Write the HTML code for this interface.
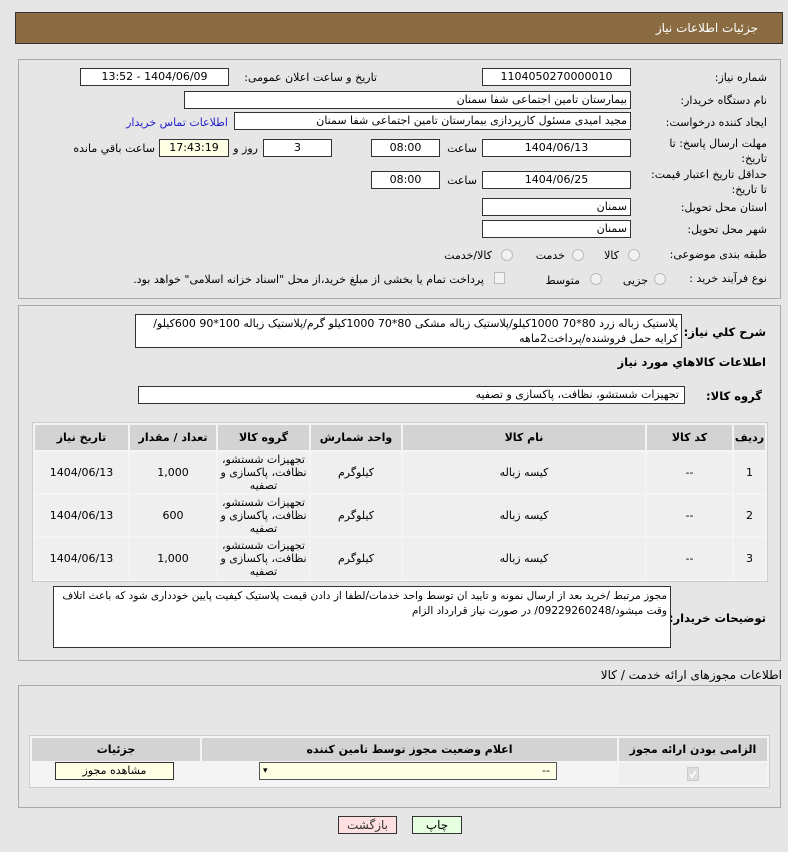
<!DOCTYPE html>
<html><head><meta charset="utf-8">
<style>
*{box-sizing:border-box;margin:0;padding:0}
body{width:788px;height:852px;background:#e6e6e6;font-family:"DejaVu Sans","Liberation Sans",sans-serif;font-size:11px;color:#000;position:relative;overflow:hidden;direction:rtl}
.a{position:absolute;white-space:nowrap}
.box{position:absolute;background:#fff;border:1px solid #333;text-align:center;height:18px;line-height:16px;font-size:11px;white-space:nowrap;overflow:hidden}
.lbl{position:absolute;white-space:nowrap;font-size:11px;line-height:14px}
.panel{position:absolute;border:1px solid #aaa}
table{border-collapse:separate;border-spacing:2px;position:absolute;background:#f4f4f4;border:1px solid #ccc;direction:rtl}
th{background:#d3d3d3;font-weight:bold;font-size:11px}
td{background:#efefef;text-align:center;font-size:11px;line-height:13px}
.rad{position:absolute;width:12px;height:12px;border:1px solid #bbb;border-radius:50%;background:#f2f2f2}
.btn{position:absolute;border:1px solid #333;height:18px;line-height:16px;text-align:center;font-size:12px}
.bl{font-weight:bold;font-size:11.5px}
</style></head><body>
<div class="a" style="left:15px;top:12px;width:768px;height:32px;background:#8b6c42;border:1px solid #333;"></div>
<div class="a" style="right:30px;top:21px;color:#fff;font-size:12px">جزئیات اطلاعات نیاز</div>

<div class="panel" style="left:18px;top:59px;width:763px;height:240px"></div>

<div class="lbl" style="right:21px;top:71px">شماره نیاز:</div>
<div class="box" style="left:482px;top:68px;width:149px">1104050270000010</div>
<div class="lbl" style="right:411px;top:71px">تاریخ و ساعت اعلان عمومی:</div>
<div class="box" style="left:80px;top:68px;width:149px">1404/06/09 - 13:52</div>

<div class="lbl" style="right:21px;top:94px">نام دستگاه خریدار:</div>
<div class="box" style="left:184px;top:91px;width:447px;text-align:right;padding-right:3px">بیمارستان تامین اجتماعی شفا سمنان</div>

<div class="lbl" style="right:21px;top:116px">ایجاد کننده درخواست:</div>
<div class="box" style="left:234px;top:112px;width:397px;text-align:right;padding-right:3px">مجید امیدی مسئول کارپردازی بیمارستان تامین اجتماعی شفا سمنان</div>
<div class="lbl" style="right:560px;top:116px;color:#2222cc">اطلاعات تماس خریدار</div>

<div class="lbl" style="right:21px;top:136px;line-height:15px;text-align:right">مهلت ارسال پاسخ: تا<br>تاریخ:</div>
<div class="box" style="left:482px;top:139px;width:149px">1404/06/13</div>
<div class="lbl" style="right:311px;top:142px">ساعت</div>
<div class="box" style="left:371px;top:139px;width:69px">08:00</div>
<div class="box" style="left:263px;top:139px;width:69px">3</div>
<div class="lbl" style="right:530px;top:142px">روز و</div>
<div class="box" style="left:159px;top:139px;width:70px;background:#ffffe6">17:43:19</div>
<div class="lbl" style="right:633px;top:142px">ساعت باقي مانده</div>

<div class="lbl" style="right:21px;top:167px;line-height:15px;text-align:right">حداقل تاریخ اعتبار قیمت:<br>تا تاریخ:</div>
<div class="box" style="left:482px;top:171px;width:149px">1404/06/25</div>
<div class="lbl" style="right:311px;top:174px">ساعت</div>
<div class="box" style="left:371px;top:171px;width:69px">08:00</div>

<div class="lbl" style="right:21px;top:201px">استان محل تحویل:</div>
<div class="box" style="left:482px;top:198px;width:149px;text-align:right;padding-right:3px">سمنان</div>
<div class="lbl" style="right:21px;top:223px">شهر محل تحویل:</div>
<div class="box" style="left:482px;top:220px;width:149px;text-align:right;padding-right:3px">سمنان</div>

<div class="lbl" style="right:21px;top:248px">طبقه بندی موضوعی:</div>
<div class="rad" style="left:628px;top:249px"></div><div class="lbl" style="right:169px;top:249px">کالا</div>
<div class="rad" style="left:572px;top:249px"></div><div class="lbl" style="right:223px;top:249px">خدمت</div>
<div class="rad" style="left:501px;top:249px"></div><div class="lbl" style="right:296px;top:249px">کالا/خدمت</div>

<div class="lbl" style="right:21px;top:272px">نوع فرآیند خرید :</div>
<div class="rad" style="left:654px;top:273px"></div><div class="lbl" style="right:140px;top:274px">جزیی</div>
<div class="rad" style="left:590px;top:273px"></div><div class="lbl" style="right:208px;top:274px">متوسط</div>
<div class="a" style="left:494px;top:272px;width:11px;height:12px;border:1px solid #bbb;background:#f2f2f2"></div>
<div class="lbl" style="right:304px;top:273px">پرداخت تمام یا بخشی از مبلغ خرید،از محل "اسناد خزانه اسلامی" خواهد بود.</div>

<div class="panel" style="left:18px;top:305px;width:763px;height:356px"></div>
<div class="lbl bl" style="right:22px;top:325px">شرح كلي نياز:</div>
<div class="a" style="left:135px;top:314px;width:547px;height:34px;background:#fff;border:1px solid #333;white-space:normal;text-align:right;padding:1px 3px;font-size:11px;line-height:15px">پلاستیک زباله زرد 80*70 1000کیلو/پلاستیک زباله مشکی 80*70 1000کیلو گرم/پلاستیک زباله 100*90 600کیلو/کرایه حمل فروشنده/پرداخت2ماهه</div>
<div class="lbl bl" style="right:22px;top:355px">اطلاعات كالاهاي مورد نياز</div>
<div class="lbl bl" style="right:26px;top:389px">گروه کالا:</div>
<div class="box" style="left:138px;top:386px;width:547px;text-align:right;padding-right:5px">تجهیزات شستشو، نظافت، پاکسازی و تصفیه</div>

<table style="left:32px;top:422px;width:736px">
<tr style="height:25px"><th style="width:31px">ردیف</th><th style="width:85px">کد کالا</th><th>نام کالا</th><th style="width:90px">واحد شمارش</th><th style="width:91px">گروه کالا</th><th style="width:86px">تعداد / مقدار</th><th style="width:93px">تاریخ نیاز</th></tr>
<tr style="height:41px"><td>1</td><td>--</td><td>کیسه زباله</td><td>کیلوگرم</td><td>تجهیزات شستشو، نظافت، پاکسازی و تصفیه</td><td>1,000</td><td>1404/06/13</td></tr>
<tr style="height:41px"><td>2</td><td>--</td><td>کیسه زباله</td><td>کیلوگرم</td><td>تجهیزات شستشو، نظافت، پاکسازی و تصفیه</td><td>600</td><td>1404/06/13</td></tr>
<tr style="height:41px"><td>3</td><td>--</td><td>کیسه زباله</td><td>کیلوگرم</td><td>تجهیزات شستشو، نظافت، پاکسازی و تصفیه</td><td>1,000</td><td>1404/06/13</td></tr>
</table>

<div class="lbl bl" style="right:22px;top:611px">توضیحات خریدار:</div>
<div class="a" style="left:53px;top:586px;width:618px;height:62px;background:#fff;border:1px solid #333;white-space:normal;text-align:right;padding:2px 3px;font-size:10.5px;line-height:15px">مجوز مرتبط /خرید بعد از ارسال نمونه و تایید ان توسط واحد خدمات/لطفا از دادن قیمت پلاستیک کیفیت پایین خودداری شود که باعث اتلاف وقت میشود/09229260248/ در صورت نیاز قرارداد الزام</div>

<div class="lbl" style="right:6px;top:668px;font-size:12px">اطلاعات مجوزهای ارائه خدمت / کالا</div>
<div class="panel" style="left:18px;top:685px;width:763px;height:123px"></div>
<table style="left:29px;top:735px;width:741px">
<tr style="height:23px"><th style="width:148px">الزامی بودن ارائه مجوز</th><th>اعلام وضعیت مجوز توسط تامین کننده</th><th style="width:168px">جزئیات</th></tr>
<tr style="height:22px"><td><span style="display:inline-block;width:12px;height:14px;background:#ddd;border:1px solid #ccc;vertical-align:middle"><svg width="10" height="12" viewBox="0 0 10 12"><path d="M2 6l2 3 4-6" stroke="#fff" stroke-width="1.5" fill="none"/></svg></span></td><td style="background:#f4f4f4"></td><td style="background:#f4f4f4"></td></tr>
</table>
<div class="a" style="left:259px;top:762px;width:298px;height:18px;background:#ffffe6;border:1px solid #555;font-size:11px;line-height:16px;padding-right:6px;text-align:right">--<span style="position:absolute;left:3px;top:0;font-size:9px">▾</span></div>
<div class="btn" style="left:55px;top:762px;width:119px;height:18px;background:#ffffe6;font-size:11px">مشاهده مجوز</div>

<div class="btn" style="left:338px;top:816px;width:59px;background:#ffe0e0;color:#333">بازگشت</div>
<div class="btn" style="left:412px;top:816px;width:50px;background:#e6ffe0">چاپ</div>
</body></html>
